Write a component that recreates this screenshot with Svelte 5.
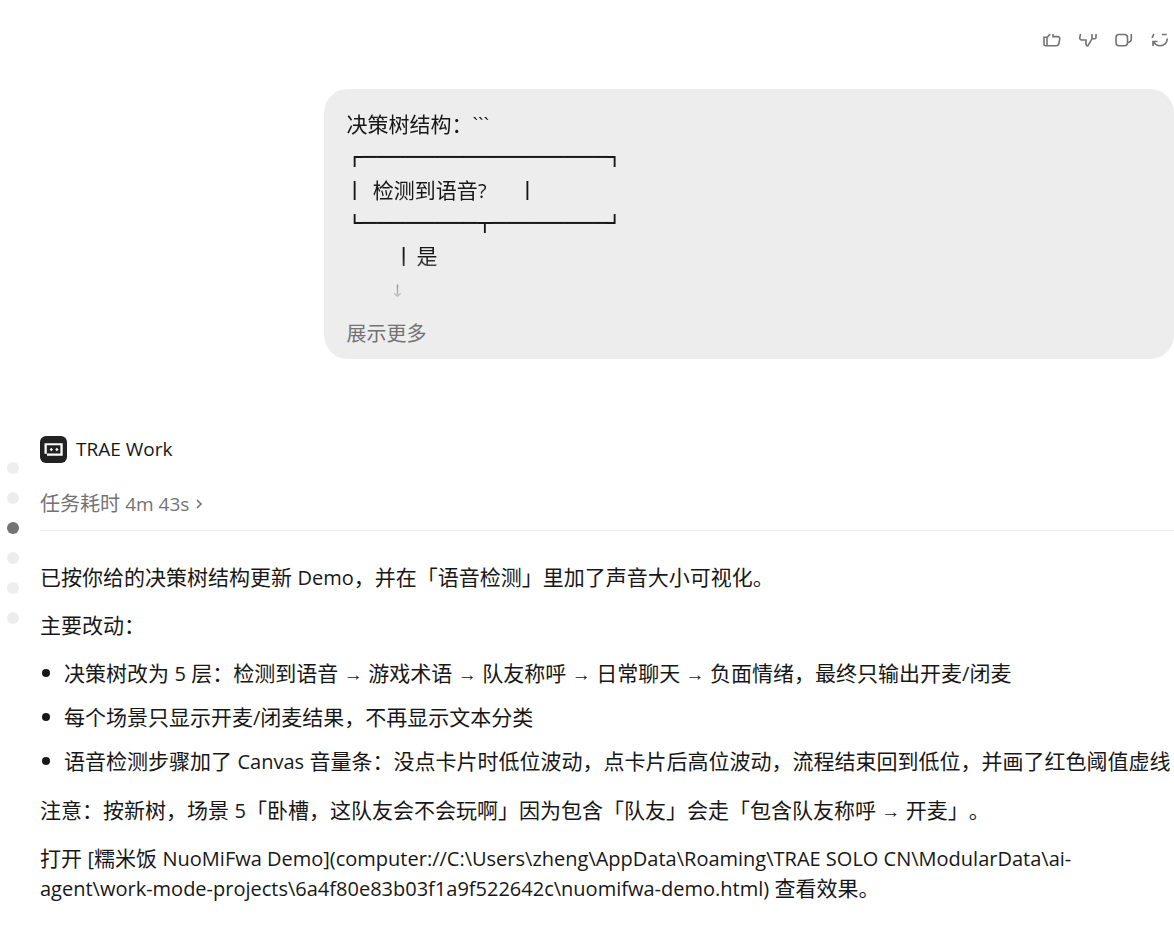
<script>
  let activeTurn = $state(2);
  let expanded = $state(false);

  const turns = [0, 1, 2, 3, 4, 5];

  const tree = [
    '决策树结构：```',
    '┌─────────────────┐',
    '│  检测到语音?      │',
    '└────────┬────────┘',
    '         │ 是',
    '        ↓'
  ];

  const changes = [
    '决策树改为 5 层：检测到语音 → 游戏术语 → 队友称呼 → 日常聊天 → 负面情绪，最终只输出开麦/闭麦',
    '每个场景只显示开麦/闭麦结果，不再显示文本分类',
    '语音检测步骤加了 Canvas 音量条：没点卡片时低位波动，点卡片后高位波动，流程结束回到低位，并画了红色阈值虚线'
  ];

  // latin words, arrows and box lines each get their own size next to the CJK text
  function split(text) {
    return text.match(/[!-~]+(?: +[!-~]+)*|[→↓]|[─-╿]+|[^!-~→↓─-╿]+/g).map((value) => {
      let kind = 'cjk';
      if (/^[!-~]/.test(value)) kind = 'latin';
      if (value === '→') kind = 'arrow';
      if (value === '↓') kind = 'down';
      if (/^[─-╿]/.test(value)) kind = 'box';
      return { value, kind };
    });
  }
</script>

{#snippet mixed(text)}
  {#each split(text) as part}{#if part.kind === 'cjk'}{part.value}{:else}<span class={part.kind}>{part.value}</span>{/if}{/each}
{/snippet}

<div class="page">
  <nav class="rail" aria-label="对话导航">
    {#each turns as turn}
      <button
        class="dot"
        class:active={turn === activeTurn}
        aria-label={`第 ${turn + 1} 轮`}
        onclick={() => (activeTurn = turn)}
      ></button>
    {/each}
  </nav>

  <main>
    <div class="actions">
      <button aria-label="赞">
        <svg width="20" height="14" viewBox="0 0 20 14">
          <path d="M2 4.200h3v8.600H3.300Q2 12.800 2 11.500ZM5 12.800h9.200q2.200 0 2.600-2.100l.9-4.400q.4-2.700-2.100-2.700h-4.600V1M5 4.800L8.200 1" />
        </svg>
      </button>
      <button aria-label="踩">
        <svg width="20" height="14" viewBox="0 0 20 14">
          <path d="M2.600 1L1.800 4.200q-.5 2.800 2.200 2.800h4v3.800q0 2.200 1.800 2.200L14 5.800V1M14 5.800h2.700q1.300 0 1.300-1.300V1" />
        </svg>
      </button>
      <button aria-label="复制">
        <svg width="20" height="14" viewBox="0 0 20 14">
          <rect x="2" y="1.500" width="11.500" height="11.300" rx="3" />
          <path d="M17.300 1v5q0 3-3.600 3.500" />
        </svg>
      </button>
      <button aria-label="重试">
        <svg width="20" height="14" viewBox="0 0 20 14">
          <path d="M2.300 5Q2.600 2.800 4 1M12 1.500h4.800M17.300 5.500Q16.800 12.600 10 12.800Q6 12.600 3.200 8.600M3 13V8.500h4.500" />
        </svg>
      </button>
    </div>

    <section class="bubble">
      <div class="tree" class:faded={!expanded}>
        {#each tree as row}
          <div class="row">{@render mixed(row)}</div>
        {/each}
      </div>
      <button class="more" onclick={() => (expanded = !expanded)}>展示更多</button>
    </section>

    <article>
      <header>
        <svg class="logo" width="27" height="27" viewBox="0 0 27 27">
          <rect width="27" height="27" rx="6" fill="#222" />
          <path d="M4.500 7.200H22.700V19.800H7V17.800H4.500ZM6.800 9.300V17.600H20.400V9.300Z" fill="#fff" fill-rule="evenodd" />
          <path d="M11.300 11.800l1.700 1.700-1.700 1.700-1.700-1.700ZM16.900 11.800l1.700 1.700-1.700 1.700-1.700-1.700Z" fill="#fff" />
        </svg>
        <span>TRAE Work</span>
      </header>

      <button class="duration">
        <span>任务耗时 <span class="time">4m 43s</span></span>
        <svg width="8" height="10" viewBox="0 0 8 10"><path d="M2 1l4 4-4 4" /></svg>
      </button>

      <div class="answer">
        <p>{@render mixed('已按你给的决策树结构更新 Demo，并在「语音检测」里加了声音大小可视化。')}</p>
        <p>主要改动：</p>
        <ul>
          {#each changes as change}
            <li><div>{@render mixed(change)}</div></li>
          {/each}
        </ul>
        <p>{@render mixed('注意：按新树，场景 5「卧槽，这队友会不会玩啊」因为包含「队友」会走「包含队友称呼 → 开麦」。')}</p>
        <p>{@render mixed('打开 [糯米饭 NuoMiFwa Demo](computer://C:\\Users\\zheng\\AppData\\Roaming\\TRAE SOLO CN\\ModularData\\ai-agent\\work-mode-projects\\6a4f80e83b03f1a9f522642c\\nuomifwa-demo.html) 查看效果。')}</p>
      </div>
    </article>
  </main>
</div>

<style>
  :global(body) {
    margin: 0;
    background: #fff;
  }
  .page {
    display: grid;
    grid-template-columns: 40px minmax(0, 1fr);
    font-family: "Open Sans", "Noto Sans CJK SC", sans-serif;
    font-size: 21px;
    line-height: 30px;
    text-spacing-trim: space-all;
    color: #171717;
  }
  button {
    padding: 0;
    border: 0;
    background: none;
    font: inherit;
    color: inherit;
    cursor: pointer;
  }
  .rail {
    display: flex;
    flex-direction: column;
    gap: 18px;
    padding: 462px 0 0 7px;
  }
  .dot {
    width: 12px;
    height: 12px;
    border-radius: 50%;
    background: #ededed;
  }
  .dot.active {
    background: #737373;
  }
  .actions {
    display: flex;
    justify-content: flex-end;
    gap: 16px;
    padding: 33px 4px 0 0;
  }
  .actions button {
    display: flex;
  }
  .actions svg,
  .duration svg {
    fill: none;
    stroke: #737373;
    stroke-width: 1.6;
  }
  .bubble {
    box-sizing: border-box;
    width: 75%;
    margin: 42px 0 0 auto;
    padding: 19px 23px 10px;
    border-radius: 24px;
    background: #ededed;
  }
  .row {
    height: 33px;
    line-height: 33px;
    white-space: pre;
  }
  .tree.faded {
    mask-image: linear-gradient(#000 75%, transparent);
  }
  .latin {
    font-size: 20px;
    line-height: 20px;
  }
  .arrow {
    font-family: "Liberation Sans", sans-serif;
    font-size: 19px;
    line-height: 20px;
  }
  .down {
    font-family: "DejaVu Sans", sans-serif;
    font-size: 17px;
    line-height: 20px;
  }
  .box {
    display: inline-block;
    height: 19px;
    margin-left: 1px;
    clip-path: inset(0);
    vertical-align: 0;
    font-family: "DejaVu Sans Mono", monospace;
    font-size: 24px;
    line-height: 19px;
  }
  .more {
    display: block;
    margin-top: 13px;
    font-size: 20px;
    color: #737373;
  }
  header {
    display: flex;
    align-items: center;
    gap: 9px;
    margin-top: 75px;
    font-size: 19px;
  }
  .duration {
    display: flex;
    align-items: center;
    gap: 6px;
    width: 100%;
    margin-top: 25px;
    padding-bottom: 11px;
    border-bottom: 1px solid #ededed;
    font-size: 20px;
    color: #737373;
  }
  .time {
    font-size: 19px;
    line-height: 20px;
  }
  .answer {
    padding: 31px 0 36px;
  }
  p {
    margin: 0 0 18px;
  }
  ul {
    margin: 0 0 19px;
    padding: 0;
    list-style: none;
  }
  li {
    display: flex;
    align-items: center;
    gap: 14px;
    margin-bottom: 14px;
    white-space: nowrap;
  }
  li::before {
    content: "";
    flex: none;
    width: 8px;
    height: 8px;
    margin-left: 2px;
    border-radius: 50%;
    background: #171717;
  }
</style>
